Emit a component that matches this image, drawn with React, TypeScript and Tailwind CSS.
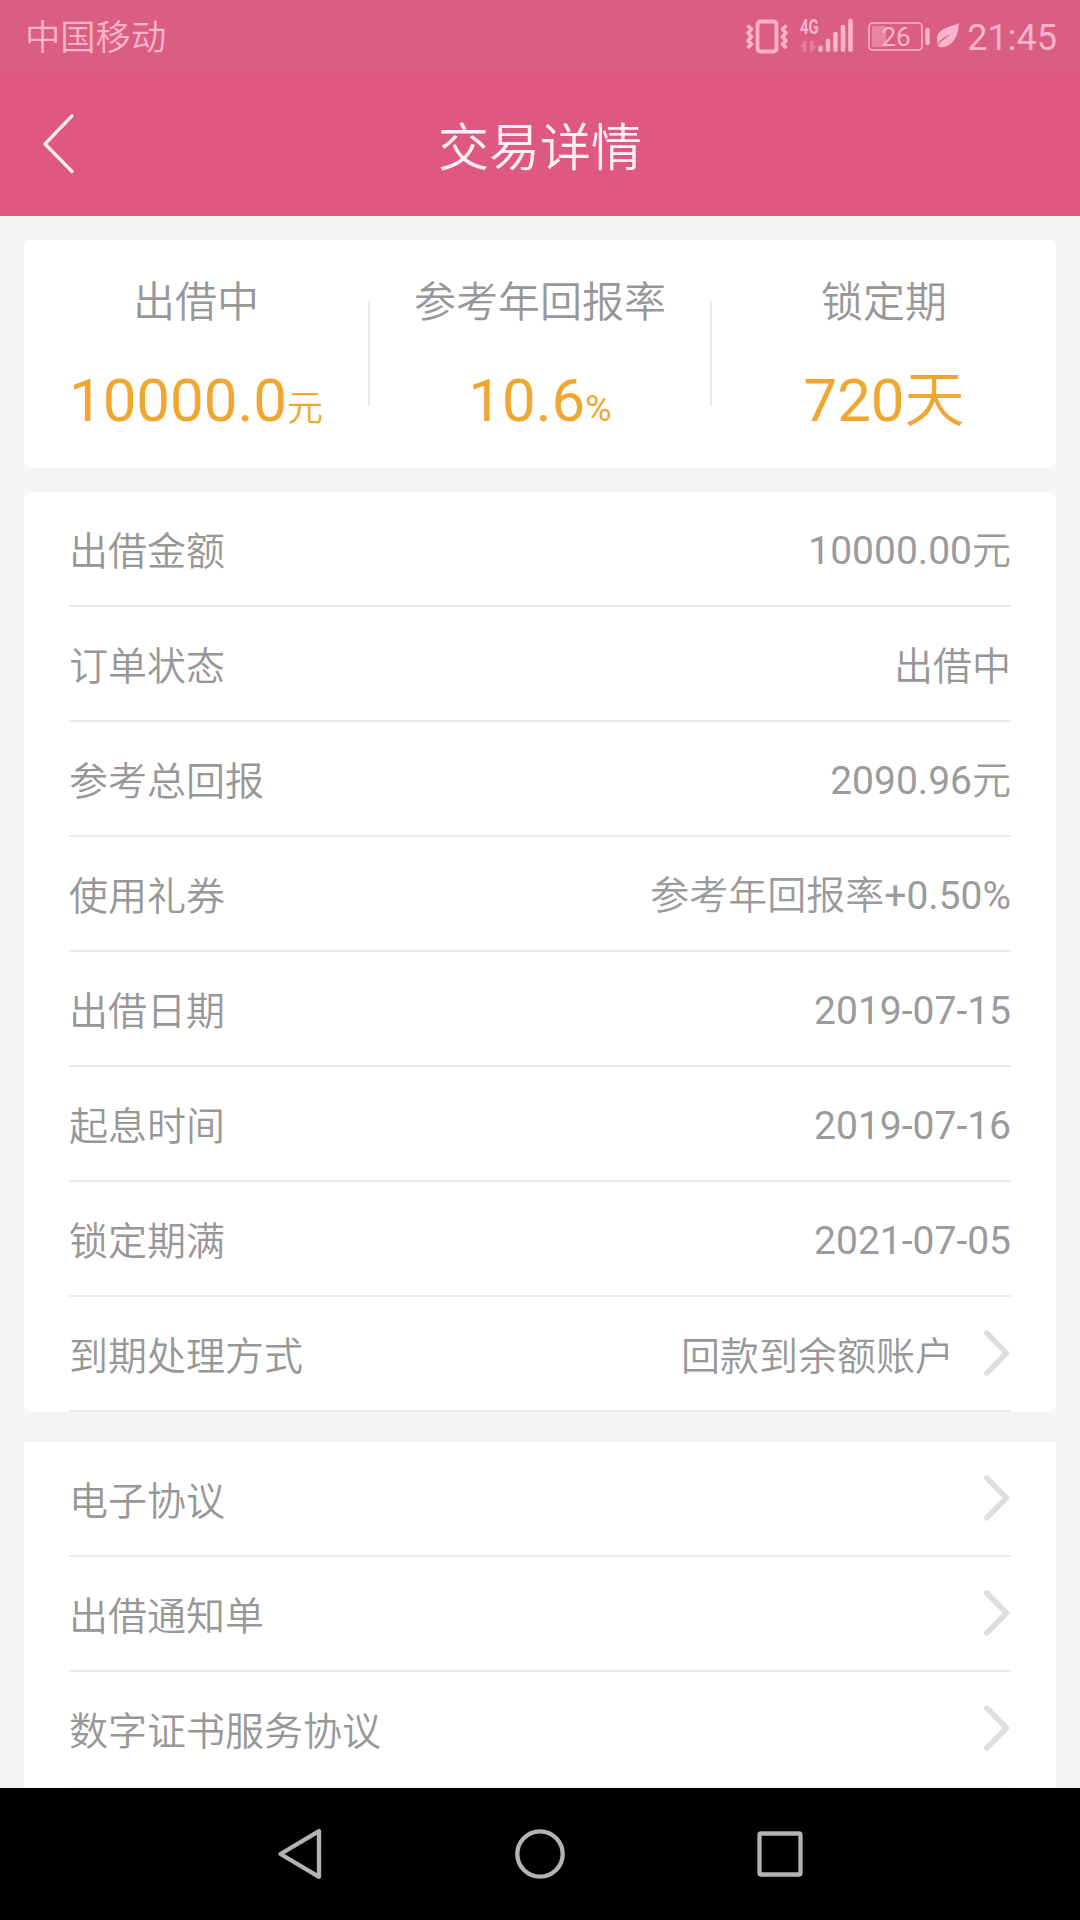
import React from "react";

const details = [
  { label: "出借金额", value: "10000.00元" },
  { label: "订单状态", value: "出借中" },
  { label: "参考总回报", value: "2090.96元" },
  { label: "使用礼券", value: "参考年回报率+0.50%" },
  { label: "出借日期", value: "2019-07-15" },
  { label: "起息时间", value: "2019-07-16" },
  { label: "锁定期满", value: "2021-07-05" },
  { label: "到期处理方式", value: "回款到余额账户", link: true },
];

const documents = ["电子协议", "出借通知单", "数字证书服务协议"];

// Sets Chinese runs in the DemiLight weight and leaves digits regular.
function Mixed({ text }: { text: string }) {
  return (
    <>
      {text.split(/([\u4e00-\u9fff]+)/).map((part, i) =>
        i % 2 === 1 ? (
          <span key={i} className="font-[350]">{part}</span>
        ) : (
          part
        )
      )}
    </>
  );
}

function Chevron() {
  return (
    <svg className="ml-[30px] mr-px -mt-[2px] h-[46px] w-[26px] shrink-0" viewBox="0 0 26 46" fill="none" stroke="#dedede" strokeWidth="5.4" strokeLinecap="round" strokeLinejoin="round">
      <path d="M2.800 3 22.500 23 2.800 43" />
    </svg>
  );
}

function Row({ label, value = "", link }: { label: string; value?: string; link?: boolean }) {
  const hasDigits = /\d/.test(value);
  return (
    <div className="flex h-[115px] items-center border-b-2 border-[#ebebeb] text-[39px] leading-none text-[#979797]">
      <span className="pt-[7px] font-[350]">{label}</span>
      <span className={hasDigits ? "ml-auto pt-[6px] text-[#9b9b9b]" : "ml-auto pt-[7px]"}>
        <Mixed text={value} />
      </span>
      {link && <Chevron />}
    </div>
  );
}

function Stat({ label, value, unit }: { label: string; value: string; unit?: string }) {
  return (
    <div className="flex flex-col items-center whitespace-nowrap">
      <div className="mt-[33px] h-[60px] text-[42px] font-[350] leading-[60px] text-[#979797]">{label}</div>
      <div className="mt-[28px] h-[80px] text-[60px] leading-[80px] text-[#efa731]">
        <Mixed text={value} />
        {unit && <span className="text-[36px]"><Mixed text={unit} /></span>}
      </div>
    </div>
  );
}

function StatusBar() {
  return (
    <div className="flex h-[72px] items-center bg-[#da5d82] pl-[25px] pr-[24px] text-[36px] leading-none text-[#fbb4cb]">
      <span className="pt-[6px] text-[35.3px] font-[350]">中国移动</span>
      <svg className="ml-auto h-[72px] w-[220px]" viewBox="745 0 220 72" fill="none" stroke="currentColor">
        <rect x="757.500" y="21.500" width="19" height="30" rx="3" strokeWidth="3.800" />
        <path d="M747.500 25.500l4 3.500-3.500 4 3.500 3.800-3.500 4 3.500 3.500-4 3.500M786.500 25.500l-4 3.500 3.500 4-3.500 3.800 3.500 4-3.500 3.500 4 3.500" strokeWidth="3.600" strokeLinejoin="round" />
        <text x="800" y="34" fontSize="20" fontWeight="700" textLength="18.500" lengthAdjust="spacingAndGlyphs" fill="currentColor" stroke="none">4G</text>
        <path d="M800 47l5-6.500h1.500V52h-3.500v-5zM816.500 46l-5 6h-1.500V41h3.500v5z" fill="currentColor" stroke="none" opacity=".4" />
        <path d="M820.500 47.800v2M828 41v8.800M835.500 34v15.800M843 27v22.800M850.500 21v28.800" strokeWidth="4.600" strokeLinecap="round" />
        <rect x="869" y="23" width="53" height="27" rx="3.500" strokeWidth="1.600" />
        <rect x="872" y="26" width="14" height="21" rx="1.500" fill="currentColor" stroke="none" opacity=".45" />
        <text x="881.500" y="46" fontSize="26" fill="currentColor" stroke="none">26</text>
        <path d="M927.500 30v13" strokeWidth="4.400" strokeLinecap="round" />
        <path d="M959 23c-8 4-22 5-22 16 0 2 0 3 .5 5 4-6 9-8 14-10-6 4-11 7-14 12 5 3 12 0 16-5 4-5 5-11 5.500-18z" fill="currentColor" stroke="none" />
      </svg>
      <span className="ml-[2px] -mr-px pt-[3px]">21:45</span>
    </div>
  );
}

export default function App() {
  return (
    <div className="flex h-[1920px] w-[1080px] flex-col overflow-hidden bg-[#f4f4f4] font-[Roboto,'Noto_Sans_CJK_SC',sans-serif]">
      <header className="h-[216px] shrink-0 bg-[#df5880]">
        <StatusBar />
        <div className="grid h-[144px] grid-cols-[120px_1fr_120px] items-center">
          <svg className="ml-[39px] h-[64px] w-[36px]" viewBox="0 0 36 64" fill="none" stroke="#ffe9f2" strokeWidth="3.300" strokeLinecap="round" strokeLinejoin="round">
            <path d="M33 3.800 6 32l27 27.500" />
          </svg>
          <h1 className="pt-[9px] text-center text-[51px] font-[350] leading-[60px] text-[#fff0f8]">交易详情</h1>
        </div>
      </header>

      <main className="flex flex-1 flex-col overflow-hidden px-6 pt-6">
        <section className="grid h-[228px] shrink-0 grid-cols-[344px_2px_340px_2px_344px] rounded-md bg-white">
          <Stat label="出借中" value="10000.0" unit="元" />
          <div className="mt-[61px] h-[105px] bg-[#ebebeb]" />
          <Stat label="参考年回报率" value="10.6" unit="%" />
          <div className="mt-[61px] h-[105px] bg-[#ebebeb]" />
          <Stat label="锁定期" value="720天" />
        </section>

        <section className="mt-6 shrink-0 rounded-md bg-white px-[45px]">
          {details.map((d) => (
            <Row key={d.label} {...d} />
          ))}
        </section>

        <section className="mt-[30px] shrink-0 bg-white px-[45px] [&>div:last-child]:border-[#fafafa]">
          {documents.map((label) => (
            <Row key={label} label={label} link />
          ))}
        </section>
      </main>

      <nav className="flex h-[132px] shrink-0 items-center justify-between bg-black px-[273px]">
        {["back", "home", "recent"].map((name) => (
          <svg key={name} className="h-[54px] w-[54px]" viewBox="0 0 54 54" fill="none" stroke="#b3b3b3" strokeWidth="4.300" strokeLinejoin="round">
            {name === "back" && <path d="M46 4.200v45.600L7.500 27z" />}
            {name === "home" && <circle cx="27" cy="27" r="22.700" />}
            {name === "recent" && <rect x="6.500" y="6.500" width="41" height="41" rx="1.500" />}
          </svg>
        ))}
      </nav>
    </div>
  );
}
